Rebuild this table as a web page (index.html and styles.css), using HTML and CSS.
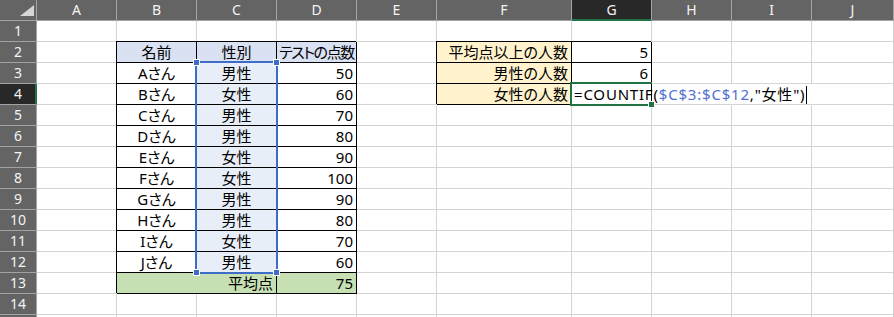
FILE: index.html
```html
<!DOCTYPE html>
<html lang="ja">
<head>
    <meta charset="UTF-8">
    <meta name="viewport" content="width=device-width, initial-scale=1.0">
    <title>COUNTIF 女性の人数</title>
    <link rel="stylesheet" href="styles.css">
</head>
<body>
    <div class="sheet" id="sheet">
        <!-- range picked up by the formula being typed in G4 -->
        <div class="ref-range">
            <span class="knob tl"></span>
            <span class="knob tr"></span>
            <span class="knob bl"></span>
            <span class="knob br"></span>
        </div>
        <!-- active cell frame -->
        <div class="active-cell">
            <span class="fill-handle"></span>
        </div>
    </div>

    <script>
        const COLS = ['A', 'B', 'C', 'D', 'E', 'F', 'G', 'H', 'I', 'J'];
        const ROW_COUNT = 15;
        const LAST_LABELED_ROW = 14; // row 15 only peeks in at the bottom
        const ACTIVE_COL = 'G';
        const ACTIVE_ROW = 4;

        const students = [
            ['A', '男性', 50], ['B', '女性', 60], ['C', '男性', 70], ['D', '男性', 80],
            ['E', '女性', 90], ['F', '女性', 100], ['G', '男性', 90], ['H', '男性', 80],
            ['I', '女性', 70], ['J', '男性', 60]
        ];

        const cells = {};
        function put(ref, text, cls) {
            cells[ref] = { text: String(text), cls: cls };
        }

        put('B2', '名前', 'center boxed head-fill');
        put('C2', '性別', 'center boxed head-fill');
        put('D2', 'テストの点数', 'center boxed head-fill tight');

        students.forEach(([name, gender, score], i) => {
            const r = i + 3;
            put('B' + r, name + 'さん', 'center boxed');
            put('C' + r, gender, 'center boxed ref-fill');
            put('D' + r, score, 'right boxed');
        });

        put('B13', '平均点', 'right boxed total-fill span2');
        put('D13', 75, 'right boxed total-fill');

        put('F2', '平均点以上の人数', 'right boxed count-fill');
        put('F3', '男性の人数', 'right boxed count-fill');
        put('F4', '女性の人数', 'right boxed count-fill');
        put('G2', 5, 'right boxed');
        put('G3', 6, 'right boxed');
        put('G4', '', 'boxed editing');
        put('H4', '', 'spill');
        put('I4', '', 'spill');

        const formula = '=COUNTIF(<span class="fx-ref">$C$3:$C$12</span>,"女性")<span class="caret"></span>';

        const sheet = document.getElementById('sheet');

        function addCell(cls, text) {
            const div = document.createElement('div');
            div.className = 'cell ' + cls;
            div.textContent = text || '';
            sheet.appendChild(div);
            return div;
        }

        // header row
        addCell('corner');
        COLS.forEach(c => addCell('col-head' + (c === ACTIVE_COL ? ' on' : ''), c));

        for (let r = 1; r <= ROW_COUNT; r++) {
            addCell('row-head' + (r === ACTIVE_ROW ? ' on' : ''), r <= LAST_LABELED_ROW ? r : '');
            COLS.forEach(c => {
                const ref = c + r;
                if (ref === 'C13') return; // merged into B13
                const cell = cells[ref];
                const div = addCell(cell ? cell.cls : '', cell ? cell.text : '');
                if (ref === 'G4') div.innerHTML = formula;
            });
        }
    </script>
</body>
</html>
```

FILE: styles.css
```css
/* Spreadsheet grid: headers, gridlines and filled cells */
body {
    margin: 0;
    background-color: #fff;
    overflow: hidden;
}

.sheet {
    position: relative;
    display: grid;
    grid-template-columns: 37px repeat(5, 80px) 135px repeat(3, 80px) 82px;
    grid-auto-rows: 21px;
    height: 317px;
    overflow: hidden;
    font-family: "Noto Sans", "Noto Sans CJK JP", sans-serif;
    font-size: 15px;
    line-height: 20px;
    color: #000;
    font-feature-settings: "palt";
}

.cell {
    border-right: 1px solid #d4d4d4;
    border-bottom: 1px solid #d4d4d4;
    padding: 0 3px;
    white-space: nowrap;
    overflow: hidden;
}

/* Column and row headers */
.corner,
.col-head,
.row-head {
    background-color: #646464;
    color: #f4f4f4;
    border-right-color: #a3a3a3;
    border-bottom-color: #a3a3a3;
    text-align: center;
    font-size: 14px;
    padding: 0;
}

.corner {
    display: flex;
    justify-content: flex-end;
    align-items: flex-end;
    padding: 0 2px 4px 0;
}

.corner::after {
    content: "";
    width: 0;
    height: 0;
    border-left: 14px solid transparent;
    border-bottom: 11px solid #d6d6d6;
}

.col-head.on {
    background-color: #282828;
    border-bottom-color: #217346;
    box-shadow: inset 0 -1px 0 #217346;
}

.row-head.on {
    background-color: #282828;
    border-right-color: #217346;
    box-shadow: inset -1px 0 0 #217346;
}

/* Cell alignment */
.center {
    text-align: center;
}

.right {
    text-align: right;
}

.span2 {
    grid-column: span 2;
}

.tight {
    padding: 0;
    letter-spacing: -1.4px;
}

/* Thin black borders; the shadow paints the left and top edges */
.boxed {
    border-right-color: #000;
    border-bottom-color: #000;
    box-shadow: -1px -1px 0 #000;
}

/* Fills */
.head-fill {
    background-color: #d9e1f2;
}

.ref-fill {
    background-color: #e8eef8;
}

.total-fill {
    background-color: #c6e0b4;
}

.count-fill {
    background-color: #fff2cc;
}

/* Cell in edit mode: formula runs over the empty cells to the right */
.editing {
    position: relative;
    z-index: 1;
    overflow: visible;
    padding-left: 2px;
    letter-spacing: 0.8px;
    background-color: #fff;
}

.spill {
    border-right-color: transparent;
}

.fx-ref {
    color: #4f6fd3;
}

.caret {
    display: inline-block;
    width: 1px;
    height: 18px;
    margin-left: 1px;
    background-color: #000;
    vertical-align: -4px;
}

/* Reference highlight around C3:C12 */
.ref-range {
    position: absolute;
    left: 195px;
    top: 61px;
    width: 83px;
    height: 213px;
    box-sizing: border-box;
    border: 2px solid #3d6dc5;
    z-index: 2;
}

.knob {
    position: absolute;
    width: 5px;
    height: 5px;
    background-color: #3d6dc5;
    border: 1px solid #fff;
}

.knob.tl { left: -4px; top: -4px; }
.knob.tr { right: -4px; top: -4px; }
.knob.bl { left: -4px; bottom: -4px; }
.knob.br { right: -4px; bottom: -4px; }

/* Active cell frame on G4 */
.active-cell {
    position: absolute;
    left: 570px;
    top: 82px;
    width: 82px;
    height: 24px;
    box-sizing: border-box;
    border: 2px solid #217346;
    border-right: none;
    z-index: 2;
}

.fill-handle {
    position: absolute;
    right: -3px;
    bottom: -4px;
    width: 5px;
    height: 5px;
    background-color: #217346;
    border: 1px solid #fff;
}
```
